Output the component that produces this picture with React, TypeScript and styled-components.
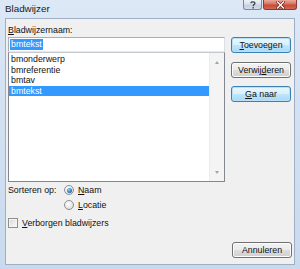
import styled, { createGlobalStyle } from "styled-components";

const Global = createGlobalStyle`
  html, body { margin: 0; padding: 0; }
  body { background: #ffffff; }
`

const Window = styled.div`
  width: 300px;
  height: 269px;
  box-sizing: border-box;
  display: flex;
  flex-direction: column;
  background: linear-gradient(180deg, #dce8f6 0%, #d3e1f2 40%, #c9daee 100%);
  font-family: "Liberation Sans", Arial, sans-serif;
  font-size: 8.8px;
  color: #111;
  overflow: hidden;
`

const TitleBar = styled.div`
  height: 18px;
  display: flex;
  align-items: flex-start;
  justify-content: space-between;
`

const Title = styled.span`
  padding: 3px 0 0 5px;
  font-size: 9.8px;
  color: #1a1a1a;
`

const CaptionButtons = styled.div`
  display: flex;
  margin-right: 3px;
`

const CaptionButton = styled.div<{ $close?: boolean }>`
  width: ${p => (p.$close ? 34 : 19)}px;
  height: 10px;
  box-sizing: border-box;
  border: 1px solid ${p => (p.$close ? "#8a3a30" : "#7d8796")};
  border-top: none;
  border-radius: 0 0 3px 3px;
  margin-left: ${p => (p.$close ? 1 : 0)}px;
  display: flex;
  align-items: center;
  justify-content: center;
  background: ${p =>
    p.$close
      ? "linear-gradient(180deg, #e9a99b 0%, #d9735f 45%, #c74a36 55%, #d26a52 100%)"
      : "linear-gradient(180deg, #eef2f7 0%, #dbe2ec 45%, #c6d0de 55%, #d3dce8 100%)"};
`

const Client = styled.div`
  flex: 1;
  margin: 0 5px 4px 5px;
  background: #f0f0f0;
  border: 1px solid #9fb0c6;
  display: flex;
  flex-direction: column;
  padding: 5px 2px 5px 1px;
`

const TopArea = styled.div`
  display: grid;
  grid-template-columns: 218px 60px;
  column-gap: 6px;
`

const Label = styled.div`
  line-height: 12px;
  height: 13px;
  padding-left: 1px;
  grid-column: 1 / span 2;
`

const LeftStack = styled.div`
  display: flex;
  flex-direction: column;
  padding-left: 1px;
`

const NameInput = styled.div`
  height: 15px;
  box-sizing: border-box;
  border: 1px solid #abadb3;
  border-bottom-color: #e3e9ef;
  border-right-color: #dbdfe6;
  background: #fff;
  display: flex;
  align-items: center;
  padding-left: 1px;
`

const Selected = styled.span`
  background: #3399ff;
  color: #fff;
  line-height: 11px;
  padding: 0 1px;
`

const ListBox = styled.div`
  height: 130px;
  box-sizing: border-box;
  border: 1px solid #828790;
  border-top-color: #c5c9d0;
  background: #fff;
  display: flex;
`

const Items = styled.div`
  flex: 1;
  padding-top: 1px;
`

const Item = styled.div<{ $active?: boolean }>`
  height: 10.5px;
  line-height: 10.5px;
  padding-left: 2px;
  background: ${p => (p.$active ? "#3399ff" : "transparent")};
  color: ${p => (p.$active ? "#fff" : "#111")};
`

const ScrollBar = styled.div`
  width: 14px;
  background: #f4f4f4;
  border-left: 1px solid #ececec;
  display: flex;
  flex-direction: column;
  justify-content: space-between;
  align-items: center;
  padding: 8px 0 7px;
`

const Arrow = styled.div<{ $down?: boolean }>`
  width: 0;
  height: 0;
  border-left: 2.5px solid transparent;
  border-right: 2.5px solid transparent;
  ${p => (p.$down ? "border-top: 3px solid #a4a4a4;" : "border-bottom: 3px solid #a4a4a4;")}
`

const ButtonColumn = styled.div`
  display: flex;
  flex-direction: column;
`

const Button = styled.div<{ $default?: boolean; $gap?: number }>`
  height: 16px;
  width: 60px;
  box-sizing: border-box;
  margin-top: ${p => p.$gap ?? 0}px;
  border: 1px solid ${p => (p.$default ? "#3c7fb1" : "#707070")};
  border-radius: 3px;
  display: flex;
  align-items: center;
  justify-content: center;
  color: #111;
  background: ${p =>
    p.$default
      ? "linear-gradient(180deg, #eaf6fd 0%, #d9f0fc 48%, #bee6fd 52%, #a7d9f5 100%)"
      : "linear-gradient(180deg, #f2f2f2 0%, #ebebeb 48%, #dddddd 52%, #cfcfcf 100%)"};
  box-shadow: inset 0 0 0 1px ${p => (p.$default ? "#b8e0f8" : "#fcfcfc")};
`

const Key = styled.span`
  text-decoration: underline;
  text-underline-offset: 1px;
`

const BottomArea = styled.div`
  flex: 1;
  display: flex;
  flex-direction: column;
  padding-left: 1px;
  padding-top: 1px;
`

const SortRow = styled.div`
  display: flex;
`

const SortLabel = styled.div`
  width: 56px;
  line-height: 14px;
`

const RadioGroup = styled.div`
  display: flex;
  flex-direction: column;
  gap: 1px;
`

const Option = styled.label`
  display: flex;
  align-items: center;
  gap: 4px;
  height: 14px;
`

const Radio = styled.span<{ $checked?: boolean }>`
  width: 10px;
  height: 10px;
  box-sizing: border-box;
  border-radius: 50%;
  border: 1px solid #8e8f8f;
  background: radial-gradient(circle at 40% 35%, #ffffff 0%, #e6e6e6 60%, #cfcfcf 100%);
  display: flex;
  align-items: center;
  justify-content: center;
  &::after {
    content: "";
    display: ${p => (p.$checked ? "block" : "none")};
    width: 5px;
    height: 5px;
    border-radius: 50%;
    background: radial-gradient(circle at 40% 35%, #8ad0ff 0%, #1d67b5 70%, #0d3d7a 100%);
  }
`

const CheckRow = styled.label`
  display: flex;
  align-items: center;
  gap: 4px;
  margin-top: 5px;
  height: 12px;
`

const Check = styled.span`
  width: 10px;
  height: 10px;
  box-sizing: border-box;
  border: 1px solid #8e8f8f;
  background: linear-gradient(135deg, #d6d6d6 0%, #eeeeee 60%, #fbfbfb 100%);
  box-shadow: inset 0 0 0 1px #f4f4f4;
`

const Footer = styled.div`
  margin-top: auto;
  display: flex;
  justify-content: flex-end;
  padding-bottom: 1px;
`

const items = ["bmonderwerp", "bmreferentie", "bmtav", "bmtekst"]

export default function App() {
  return (
    <>
      <Global />
      <Window>
        <TitleBar>
          <Title>Bladwijzer</Title>
          <CaptionButtons>
            <CaptionButton>
              <svg width="6" height="8" viewBox="0 0 6 8">
                <path d="M1 2.2 Q1 0.8 3 0.8 Q5 0.8 5 2.3 Q5 3.3 3.5 3.9 L3.2 5.2" fill="none" stroke="#3a4350" strokeWidth="1.3" />
                <rect x="2.5" y="6.1" width="1.4" height="1.4" fill="#3a4350" />
              </svg>
            </CaptionButton>
            <CaptionButton $close>
              <svg width="9" height="8" viewBox="0 0 9 8">
                <path d="M1.5 1 L7.5 7 M7.5 1 L1.5 7" stroke="#5b1d16" strokeWidth="2.6" strokeLinecap="square" />
                <path d="M1.5 1 L7.5 7 M7.5 1 L1.5 7" stroke="#ffffff" strokeWidth="1.4" strokeLinecap="square" />
              </svg>
            </CaptionButton>
          </CaptionButtons>
        </TitleBar>
        <Client>
          <TopArea>
            <Label><Key>B</Key>ladwijzernaam:</Label>
            <LeftStack>
              <NameInput><Selected>bmtekst</Selected></NameInput>
              <ListBox>
                <Items>
                  {items.map(item => (
                    <Item key={item} $active={item === "bmtekst"}>{item}</Item>
                  ))}
                </Items>
                <ScrollBar>
                  <Arrow />
                  <Arrow $down />
                </ScrollBar>
              </ListBox>
            </LeftStack>
            <ButtonColumn>
              <Button $default><span><Key>T</Key>oevoegen</span></Button>
              <Button $gap={9}><span>Verwij<Key>d</Key>eren</span></Button>
              <Button $default $gap={8}><span><Key>G</Key>a naar</span></Button>
            </ButtonColumn>
          </TopArea>
          <BottomArea>
            <SortRow>
              <SortLabel>Sorteren op:</SortLabel>
              <RadioGroup>
                <Option><Radio $checked /><span><Key>N</Key>aam</span></Option>
                <Option><Radio /><span><Key>L</Key>ocatie</span></Option>
              </RadioGroup>
            </SortRow>
            <CheckRow><Check /><span><Key>V</Key>erborgen bladwijzers</span></CheckRow>
            <Footer>
              <Button>Annuleren</Button>
            </Footer>
          </BottomArea>
        </Client>
      </Window>
    </>
  )
}
